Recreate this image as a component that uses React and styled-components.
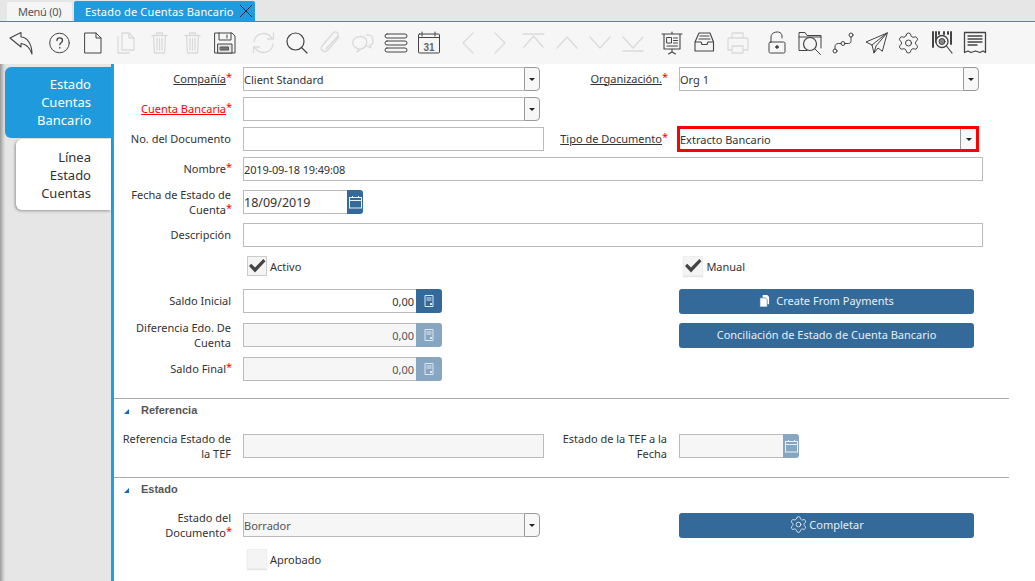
import React from 'react';
import styled, { createGlobalStyle } from 'styled-components';
import { Settings } from 'lucide-react';

const Global = createGlobalStyle`
  html, body { margin: 0; padding: 0; height: 581px; overflow: hidden; background: #fff; }
  body { font-family: "Noto Sans", "Open Sans", sans-serif; font-size: 11px; color: #333; }
  * { box-sizing: border-box; }
`;

const Page = styled.div`display: flex; flex-direction: column; width: 1035px; height: 581px; overflow: hidden;`;
const TabBar = styled.div`display: flex; align-items: flex-end; height: 22px; padding-left: 7px; gap: 2px; background: #e6e6e6; border-bottom: 1px solid #2e8fca;`;
const Tab = styled.div`
  display: flex; align-items: center; font-size: 11px; border-radius: 2px 2px 0 0; flex: none;
  height: ${p => (p.$active ? '20px' : '19px')};
  padding-left: 11px;
  width: ${p => (p.$active ? '181px' : '65px')};
  background: ${p => (p.$active ? '#229bdc' : '#f5f5f5')};
  color: ${p => (p.$active ? '#fff' : '#555')};
  letter-spacing: ${p => (p.$active ? '0.17px' : '-0.3px')};
`;
const TabClose = styled.svg`width: 14px; height: 14px; margin-left: 5px; flex: none;`;

const Toolbar = styled.div`display: flex; align-items: center; height: 42px; padding-left: 4px; background: #f6f6f6;`;
const ToolGroup = styled.div`display: flex; margin-right: ${p => p.$gap ?? 6}px; margin-left: ${p => p.$before ?? 0}px;`;
const ToolIcon = styled.svg`
  width: 33px; height: 34px; flex: none; fill: none;
  color: ${p => (p.$off ? '#dadada' : '#444')};
  stroke: currentColor;
  stroke-width: ${p => (p.$off ? 1.3 : 1)}; stroke-linecap: round; stroke-linejoin: round;
`;

const Body = styled.div`display: flex; flex: 1; min-height: 0;`;
const Side = styled.div`
  width: 114px; flex: none; padding-top: 3px; background: linear-gradient(90deg, #9a9a9a 0, #d8d8d8 4px, #e6e6e6 6px);
  border-right: 3px solid #1f9ee0; display: flex; flex-direction: column; align-items: flex-end;
`;
const SideTab = styled.div`
  width: ${p => (p.$active ? '106px' : '95px')};
  height: 71px;
  margin-top: ${p => (p.$active ? '0' : '1px')};
  padding: ${p => (p.$active ? '8px 20px 0 0' : '9px 20px 0 0')};
  border-radius: 6px 0 0 6px; text-align: right; font-size: 13px; line-height: 18px;
  background: ${p => (p.$active ? '#1f9bdd' : '#fff')};
  color: ${p => (p.$active ? '#fff' : '#333')};
  box-shadow: ${p => (p.$active ? 'none' : '-1px 1px 3px rgba(0,0,0,.35)')};
`;

const Form = styled.div`flex: 1; min-width: 0; display: flex; flex-direction: column; padding-top: 3px;`;
const Row = styled.div`display: flex; align-items: center; height: ${p => p.$h ?? 24}px; margin-bottom: ${p => p.$mb ?? 6}px;`;
const Label = styled.div`
  width: ${p => p.$w ?? 117}px; flex: none; text-align: right; line-height: 15px; font-size: 11px; color: #333;
  padding-bottom: ${p => (p.$wrap ? 0 : 2)}px;
`;
const LabelText = styled.span`
  color: ${p => (p.$red ? '#f00' : '#333')};
  text-decoration: ${p => (p.$link ? 'underline' : 'none')};
`;
const Star = styled.span`display: inline-block; width: 5px; line-height: 11px; color: #f00; position: relative; top: -2px;`;
const FieldWrap = styled.div`
  display: flex; width: ${p => p.$w}px; height: 24px; flex: none; margin-left: ${p => p.$ml ?? 12}px;
`;
const Input = styled.div`
  flex: 1; min-width: 0; height: 100%; display: flex; align-items: center; padding: 0 ${p => (p.$right ? 2 : 0)}px 0 0;
  border: 1px solid #bbb; border-right: ${p => (p.$noRight ? 'none' : '1px solid #bbb')};
  background: ${p => (p.$off ? '#f6f6f6' : '#fff')};
  font-size: ${p => p.$size ?? 11}px; color: ${p => (p.$off ? '#555' : '#333')};
  letter-spacing: ${p => p.$ls ?? 0}px;
  justify-content: ${p => (p.$right ? 'flex-end' : 'flex-start')};
`;
const Caret = styled.div`
  width: 16px; flex: none; display: flex; align-items: center; justify-content: center;
  background: #f7f7f7; border: 1px solid #999; border-radius: 0 4px 4px 0;
  &::after { content: ""; border-left: 3.5px solid transparent; border-right: 3.5px solid transparent; border-top: 3.5px solid #222; }
`;
const SideBtn = styled.div`
  width: ${p => p.$w ?? 26}px; flex: none; display: flex; align-items: center; justify-content: center;
  background: ${p => (p.$off ? '#86a6c2' : '#336a99')}; border-radius: 0 3px 3px 0;
`;
const RedBox = styled.div`
  display: flex; width: 302px; height: 26px; margin-left: 10px; flex: none; border: 3px solid #f00;
  ${Input} { border: none; }
  ${Caret} { border: none; border-left: 1px solid #999; border-radius: 0; }
`;
const CheckWrap = styled.div`display: flex; align-items: center; gap: 3px; flex: none; margin-left: ${p => p.$ml}px; font-size: 11px;`;
const CheckBox = styled.div`
  width: 20px; height: 20px; display: flex; align-items: center; justify-content: center;
  background: #f4f4f4; border: 1px solid ${p => (p.$border ? '#ccc' : '#eee')};
  box-shadow: ${p => (p.$border ? 'none' : '0 1px 1px #e4e4e4')};
`;
const ActionBtn = styled.div`
  width: 295px; height: 25px; flex: none; margin-left: ${p => p.$ml ?? 0}px; display: flex; align-items: center; justify-content: center;
  gap: ${p => p.$gap ?? 6}px; background: #336a99; color: #e6eef5; border-radius: 3px; font-size: 11px; padding-bottom: 1px;
`;
const Divider = styled.div`height: 1px; background: #aaa; margin-right: 26px;`;
const Section = styled.div`
  display: flex; align-items: center; height: ${p => p.$h}px; padding: 0 0 0 10px; gap: 12px;
  font-family: "Liberation Sans", Arial, sans-serif; font-size: 11px; font-weight: 700; color: #555;
  &::before { content: ""; width: 0; height: 0; border-left: 5px solid transparent; border-bottom: 5px solid #1565c0; margin-top: 3px; }
`;
const Spacer = styled.div`height: ${p => p.$h}px; flex: none;`;

const I = ({ off, children }) => <ToolIcon $off={off} viewBox="0 0 33 34">{children}</ToolIcon>;

const L = ({ children, req, link, red, w, wrap }) => (
  <Label $w={w} $wrap={wrap}>
    <LabelText $link={link} $red={red}>{children}</LabelText>{req && <Star>*</Star>}
  </Label>
);
const Calc = () => (
  <svg width="10" height="12" viewBox="0 0 10 12"><path d="M1 .5h8v11H1z M2.500 3h5 M2.500 5h5" fill="none" stroke="#dfe8f0" strokeWidth="1"/><rect x="6" y="8" width="2" height="2" fill="#dfe8f0"/></svg>
);
const CalIcon = () => (
  <svg width="13" height="14" viewBox="0 0 13 14" fill="none" stroke="#e8f0f6" strokeWidth="1"><rect x=".5" y="2.500" width="12" height="10.500"/><path d="M.5 5.500h12M3.500 1v2M9.500 1v2"/></svg>
);
const Check = () => (
  <svg width="18" height="16" viewBox="0 0 18 16"><path d="M1 8l2.200-2.200 3.800 3.700L15.300 1l2.200 2.200L7 14.500z" fill="#444"/></svg>
);
const TrashPaths = () => (
  <path d="M10 9.500h15M14.500 9.500V7h6v2.500M11.500 9.500l1 17.500h10l1-17.500M15 12.500v11.500M17.500 12.500v11.500M20 12.500v11.500"/>
);

export default function App() {
  return (
    <Page>
      <Global />
      <TabBar>
        <Tab>Menú (0)</Tab>
        <Tab $active>Estado de Cuentas Bancario
          <TabClose viewBox="0 0 14 14" fill="none" stroke="#123" strokeWidth="1"><path d="M1 1l12 12M13 1L1 13"/></TabClose>
        </Tab>
      </TabBar>
      <Toolbar>
        <ToolGroup>
          <I><path d="M6 12L17 6.500v4.500c6 0 11 7 11 17-2-6-6-10-11-10.500V21z" strokeWidth="1.100"/></I>
        </ToolGroup>
        <ToolGroup>
          <I><circle cx="16.500" cy="17" r="9.800"/><path d="M14 14.500c0-3.500 5.500-3.500 5.500 0 0 2.200-2.700 2.200-2.700 4.200M16.800 21.500v.5" strokeWidth="1.300"/></I>
          <I><path d="M9 7h11l5 5v15H9z M20 7v5h5"/></I>
          <I off><path d="M13 7h7l5 5v12H13zM9 11v16h11M20 7v5h5"/></I>
          <I off><TrashPaths /></I>
          <I off><TrashPaths /></I>
          <I><path d="M7 7h17l3 3v17H7z M11 7v7h12V7M19 9v3"/><path d="M10 18h14v9H10z" fill="#e4e4e4"/><path d="M12.500 21h8v3h-8z" fill="#777" stroke="#555"/></I>
        </ToolGroup>
        <ToolGroup $gap={6}>
          <I off><path d="M7 16c1-9 12-11 17-5l2 2M26.500 7v6h-6M26 18c-1 9-12 11-17 5l-2-2M6.500 27v-6h6"/></I>
          <I><circle cx="15.500" cy="15.500" r="8.500" strokeWidth="1.200"/><path d="M21.500 21.500L27 27" strokeWidth="1.200"/></I>
          <I off><path d="M26 11L15 24c-4 4-9-1-6-4l11-13c3-3 7 1 4 4L13 23"/></I>
          <I off><path d="M13 23c-5-1-7-4-6-8 2-5 10-6 13-2 2 4 0 9-5 10l-4 3zM21 9c4-1 6 2 6 6 0 2-1 4-3 4l1 3-4-2"/></I>
          <I><rect x="6" y="8" width="22" height="4" rx="2"/><rect x="6" y="15" width="22" height="4" rx="2"/><rect x="6" y="22" width="22" height="4" rx="2"/></I>
          <I><rect x="6.500" y="8" width="21" height="19" rx="1"/><path d="M6.500 11.500h21M10 6v4M23 6v4"/><text x="17" y="24.500" textAnchor="middle" fontSize="10" fontFamily="Liberation Sans" fontWeight="700" fill="#666" stroke="none">31</text></I>
        </ToolGroup>
        <ToolGroup>
          <I off><path d="M22 7L12 17l10 10"/></I>
          <I off><path d="M11 7l10 10-10 10"/></I>
          <I off><path d="M6 8h21M7 21l9.500-11L26 21"/></I>
          <I off><path d="M7 22l10-11 10 11"/></I>
          <I off><path d="M7 11l10 11 10-11"/></I>
          <I off><path d="M7 11l10 11 10-11M7 25h20"/></I>
        </ToolGroup>
        <ToolGroup>
          <I><path d="M7 8h20M9 8v15h16V8M17 6v2M17 23v3M13.500 28l3.500-2 3.500 2" strokeWidth="1.100"/><rect x="12" y="11.500" width="4.500" height="5.500"/><path d="M18.500 12h4M18.500 14.500h4M18.500 17h4M12 20h10.500"/></I>
          <I><path d="M11 7h11l3.500 9v9H7v-9zM7 16h6l1 2.500h5l1-2.500h5.500M12 10h9M11 13h11" strokeWidth="1.100"/></I>
          <I off><path d="M11 12V7h11v5M8 12h17c1 0 2 1 2 2v10h-5M11 24H7V14c0-1 0-2 1-2M11 20h11v7H11z"/></I>
        </ToolGroup>
        <ToolGroup $gap={0}>
          <I><path d="M11 16v-5c0-6 11-7 11-1v2"/><rect x="9" y="16" width="16" height="11" rx="1.500"/><circle cx="17" cy="21" r="1.300" fill="#444"/></I>
          <I><path d="M28 22V9.500H14l-2-3H6v18h8"/><path d="M6 11h22"/><circle cx="17" cy="18" r="6.500" strokeWidth="1.200"/><path d="M22 23l5.500 5.500"/></I>
          <I><circle cx="9" cy="25" r="2"/><circle cx="17" cy="17.500" r="2"/><circle cx="25" cy="9" r="2"/><path d="M9 23v-2c0-2 1-3.500 3.500-3.500H15M19 17.500h3.500c2 0 2.500-1 2.500-3V11"/></I>
          <I><path d="M28 7L7 16l6 3 2 8 4-5 4 3zM28 7L13 19M15 27l2-7L28 7"/></I>
          <I><Settings x="4.500" y="5" width="24" height="24" strokeWidth="1" color="#444" /></I>
          <I><path d="M8 6v15M11 6v10M14 6v2M19 6v2M23 6v2M26 6v12" strokeWidth="2"/><circle cx="17" cy="15.500" r="6" strokeWidth="1.300" fill="#f6f6f6"/><circle cx="17" cy="15.500" r="3" fill="#888"/><path d="M21.500 20l5.500 7" strokeWidth="1.200"/></I>
          <I><path d="M6.500 6.500h21v20l-2.500-1.500-3 1.500-4.500-1.500-4.500 1.500-3-1.500-3.500 1.500z" strokeWidth="1.300"/><path d="M10 10h14M10 13h14M10 16h14M10 19h9" strokeWidth="1.300"/></I>
        </ToolGroup>
      </Toolbar>
      <Body>
        <Side>
          <SideTab $active>Estado<br />Cuentas<br />Bancario</SideTab>
          <SideTab>Línea<br />Estado<br />Cuentas</SideTab>
        </Side>
        <Form>
          <Row>
            <L link req>Compañía</L>
            <FieldWrap $w={297}><Input $noRight>Client Standard</Input><Caret /></FieldWrap>
            <L link req w={127}>Organización.</L>
            <FieldWrap $w={300}><Input $noRight>Org 1</Input><Caret /></FieldWrap>
          </Row>
          <Row>
            <L link red req>Cuenta Bancaria</L>
            <FieldWrap $w={297}><Input $noRight /><Caret /></FieldWrap>
          </Row>
          <Row>
            <L>No. del Documento</L>
            <FieldWrap $w={301}><Input /></FieldWrap>
            <L link req w={123}>Tipo de Documento</L>
            <RedBox><Input $noRight>Extracto Bancario</Input><Caret /></RedBox>
          </Row>
          <Row $mb={9}>
            <L req>Nombre</L>
            <FieldWrap $w={740}><Input $ls={-0.15}>2019-09-18 19:49:08</Input></FieldWrap>
          </Row>
          <Row $mb={9}>
            <L wrap req>Fecha de Estado de Cuenta</L>
            <FieldWrap $w={120}><Input $size={12.5} $noRight>18/09/2019</Input><SideBtn $w={16}><CalIcon /></SideBtn></FieldWrap>
          </Row>
          <Row $mb={9}>
            <L>Descripción</L>
            <FieldWrap $w={740}><Input /></FieldWrap>
          </Row>
          <Row $h={20} $mb={13}>
            <CheckWrap $ml={133}><CheckBox $border><Check /></CheckBox>Activo</CheckWrap>
            <CheckWrap $ml={382}><CheckBox><Check /></CheckBox>Manual</CheckWrap>
          </Row>
          <Row $mb={10}>
            <L>Saldo Inicial</L>
            <FieldWrap $w={199}><Input $right $noRight>0,00</Input><SideBtn><Calc /></SideBtn></FieldWrap>
            <ActionBtn $ml={237}>
              <svg width="11" height="12" viewBox="0 0 12 13"><path d="M4 0h5l2 2v8H4z" fill="#fff"/><path d="M1 3h6l2 2v8H1z" fill="#fff" stroke="#336a99" strokeWidth=".7"/></svg>
              Create From Payments
            </ActionBtn>
          </Row>
          <Row $mb={10}>
            <L wrap>Diferencia Edo. De Cuenta</L>
            <FieldWrap $w={199}><Input $off $right $noRight>0,00</Input><SideBtn $off><Calc /></SideBtn></FieldWrap>
            <ActionBtn $ml={237}>Conciliación de Estado de Cuenta Bancario</ActionBtn>
          </Row>
          <Row $mb={17}>
            <L req>Saldo Final</L>
            <FieldWrap $w={199}><Input $off $right $noRight>0,00</Input><SideBtn $off><Calc /></SideBtn></FieldWrap>
          </Row>
          <Divider />
          <Section $h={22}>Referencia</Section>
          <Spacer $h={13} />
          <Row $mb={19}>
            <L wrap>Referencia Estado de la TEF</L>
            <FieldWrap $w={301}><Input $off /></FieldWrap>
            <L wrap w={123}>Estado de la TEF a la Fecha</L>
            <FieldWrap $w={120}><Input $off $noRight /><SideBtn $off $w={16}><CalIcon /></SideBtn></FieldWrap>
          </Row>
          <Divider />
          <Section $h={22}>Estado</Section>
          <Spacer $h={13} />
          <Row $mb={11}>
            <L wrap req>Estado del Documento</L>
            <FieldWrap $w={297}><Input $off $noRight>Borrador</Input><Caret /></FieldWrap>
            <ActionBtn $ml={139} $gap={1}>
              <Settings size={19} strokeWidth={1.1} color="#e6eef5" />
              Completar
            </ActionBtn>
          </Row>
          <Row $h={22} $mb={0}>
            <CheckWrap $ml={133}><CheckBox /></CheckWrap>
            <CheckWrap $ml={3}>Aprobado</CheckWrap>
          </Row>
        </Form>
      </Body>
    </Page>
  );
}
